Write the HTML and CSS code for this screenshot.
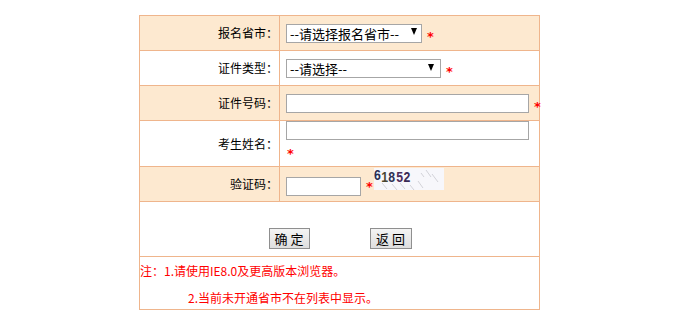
FILE: index.html
```html
<!DOCTYPE html>
<html lang="zh-CN">
<head>
<meta charset="utf-8">
<title>报名</title>
<link rel="stylesheet" href="styles.css">
</head>
<body>
<form class="form">
  <div class="label shade">报名省市：</div>
  <div class="value shade">
    <span class="select-wrap">
      <select class="select select-prov"><option>--请选择报名省市--</option></select>
      <span class="arrow"><svg width="6" height="7" viewBox="0 0 6 7"><path d="M0 0H6L3 7Z" fill="#000"/></svg></span>
    </span>
    <span class="star">*</span>
  </div>

  <div class="label">证件类型：</div>
  <div class="value">
    <span class="select-wrap">
      <select class="select select-type"><option>--请选择--</option></select>
      <span class="arrow"><svg width="6" height="7" viewBox="0 0 6 7"><path d="M0 0H6L3 7Z" fill="#000"/></svg></span>
    </span>
    <span class="star">*</span>
  </div>

  <div class="label shade">证件号码：</div>
  <div class="value shade">
    <input class="text text-long" type="text">
    <span class="star">*</span>
  </div>

  <div class="label">考生姓名：</div>
  <div class="value value-stack">
    <input class="text text-long" type="text">
    <span class="star star-below">*</span>
  </div>

  <div class="label shade">验证码：</div>
  <div class="value shade value-code">
    <input class="text text-short" type="text">
    <span class="star">*</span>
    <svg class="captcha" width="70" height="22" viewBox="0 0 70 22">
      <rect width="70" height="22" fill="#f7f7fb"/>
      <g stroke="#c9c9cf" stroke-width="0.8" fill="none">
        <path d="M8 15 L13 21"/>
        <path d="M18 16 L23 22"/>
        <path d="M26 15 L31 21"/>
        <path d="M36 17 L40 22"/>
        <path d="M44 13 L49 20"/>
        <path d="M52 2 L57 9"/>
        <path d="M58 6 L64 14"/>
        <path d="M47 5 L50 9"/>
      </g>
      <g font-family="Liberation Sans, sans-serif" font-weight="bold" font-size="15" transform="scale(0.82 1)">
        <text x="0" y="12" fill="#2b2f52">6</text>
        <text x="9" y="14" fill="#4a4630">1</text>
        <text x="17.5" y="14" fill="#2e3254">8</text>
        <text x="27" y="14" fill="#4b2c5c">5</text>
        <text x="36" y="14" fill="#3a2a55">2</text>
      </g>
    </svg>
  </div>

  <div class="buttons">
    <button type="button" class="btn btn-ok">确 定</button>
    <button type="button" class="btn btn-back">返 回</button>
  </div>

  <div class="notes">
    <div>注：1.请使用IE8.0及更高版本浏览器。</div>
    <div class="note-indent">2.当前未开通省市不在列表中显示。</div>
  </div>
</form>
</body>
</html>
```

FILE: styles.css
```css
html, body {
  margin: 0;
  padding: 0;
  background: #ffffff;
}

body {
  font-family: "Noto Sans CJK SC", "Noto Sans", sans-serif;
  font-size: 12px;
  color: #000;
}

.form {
  margin: 15px 0 0 139px;
  width: 400px;
  display: grid;
  grid-template-columns: 140px 260px;
  grid-template-rows: 35px 35px 35px 46px 35px 55px 53px;
  border-top: 1px solid #efb58c;
  border-left: 1px solid #efb58c;
}

.form > div {
  box-sizing: border-box;
  border-right: 1px solid #efb58c;
  border-bottom: 1px solid #efb58c;
}

.shade {
  background: #fde9d0;
}

.label {
  display: flex;
  align-items: center;
  justify-content: flex-end;
  padding-right: 1px;
  font-size: 12px;
  line-height: 14px;
}

.value {
  display: flex;
  align-items: center;
  padding-left: 6px;
  white-space: nowrap;
}

.select-wrap {
  position: relative;
  display: inline-block;
  height: 19px;
}

.select {
  -webkit-appearance: none;
  appearance: none;
  box-sizing: border-box;
  height: 19px;
  margin: 0;
  padding: 0 0 0 3px;
  border: 1px solid #a6a6a6;
  border-radius: 0;
  background: #fff;
  color: #000;
  font-family: "Noto Sans CJK SC", "Noto Sans", sans-serif;
  font-size: 13px;
  line-height: 17px;
}

.select-prov {
  width: 136px;
}

.select-type {
  width: 155px;
}

.arrow {
  position: absolute;
  right: 5px;
  top: 4px;
  line-height: 0;
}

.select-type + .arrow {
  right: 7px;
  top: 5px;
}

.star {
  color: #ff0000;
  font-family: "DejaVu Sans", sans-serif;
  font-weight: bold;
  font-size: 13px;
  margin-left: 5px;
  position: relative;
  top: 3px;
}

.text {
  box-sizing: border-box;
  height: 19px;
  margin: 0;
  padding: 0 2px;
  border: 1px solid #a6a6a6;
  background: #fff;
  flex-shrink: 0;
}

.text-long {
  width: 243px;
}

.text-short {
  width: 75px;
}

.value-stack {
  flex-direction: column;
  align-items: flex-start;
  justify-content: flex-start;
}

.star-below {
  margin-left: 1px;
  margin-top: 7px;
  line-height: 14px;
  top: 0;
}

.value-code {
  align-items: flex-start;
}

.value-code .text {
  margin-top: 10px;
}

.value-code .star {
  margin-top: 13px;
  margin-left: 5px;
  top: 0;
  line-height: 14px;
}

.captcha {
  margin-top: 1px;
  margin-left: 1px;
  display: block;
}

.buttons {
  grid-column: 1 / -1;
  display: flex;
  justify-content: center;
  align-items: flex-start;
  gap: 60px;
  padding-top: 26px;
  padding-left: 1px;
}

.btn {
  box-sizing: border-box;
  height: 21px;
  margin: 0;
  padding: 0;
  border: 1px solid #8f8f8f;
  border-radius: 0;
  background: linear-gradient(#f4f4f4, #dedede);
  color: #000;
  font-family: "Noto Sans CJK SC", "Noto Sans", sans-serif;
  font-size: 13px;
  line-height: 19px;
}

.btn-ok {
  width: 41px;
}

.btn-back {
  width: 42px;
}

.notes {
  grid-column: 1 / -1;
  color: #ff0000;
  font-size: 12px;
  line-height: 27px;
  white-space: nowrap;
}

.note-indent {
  padding-left: 48px;
}
```
